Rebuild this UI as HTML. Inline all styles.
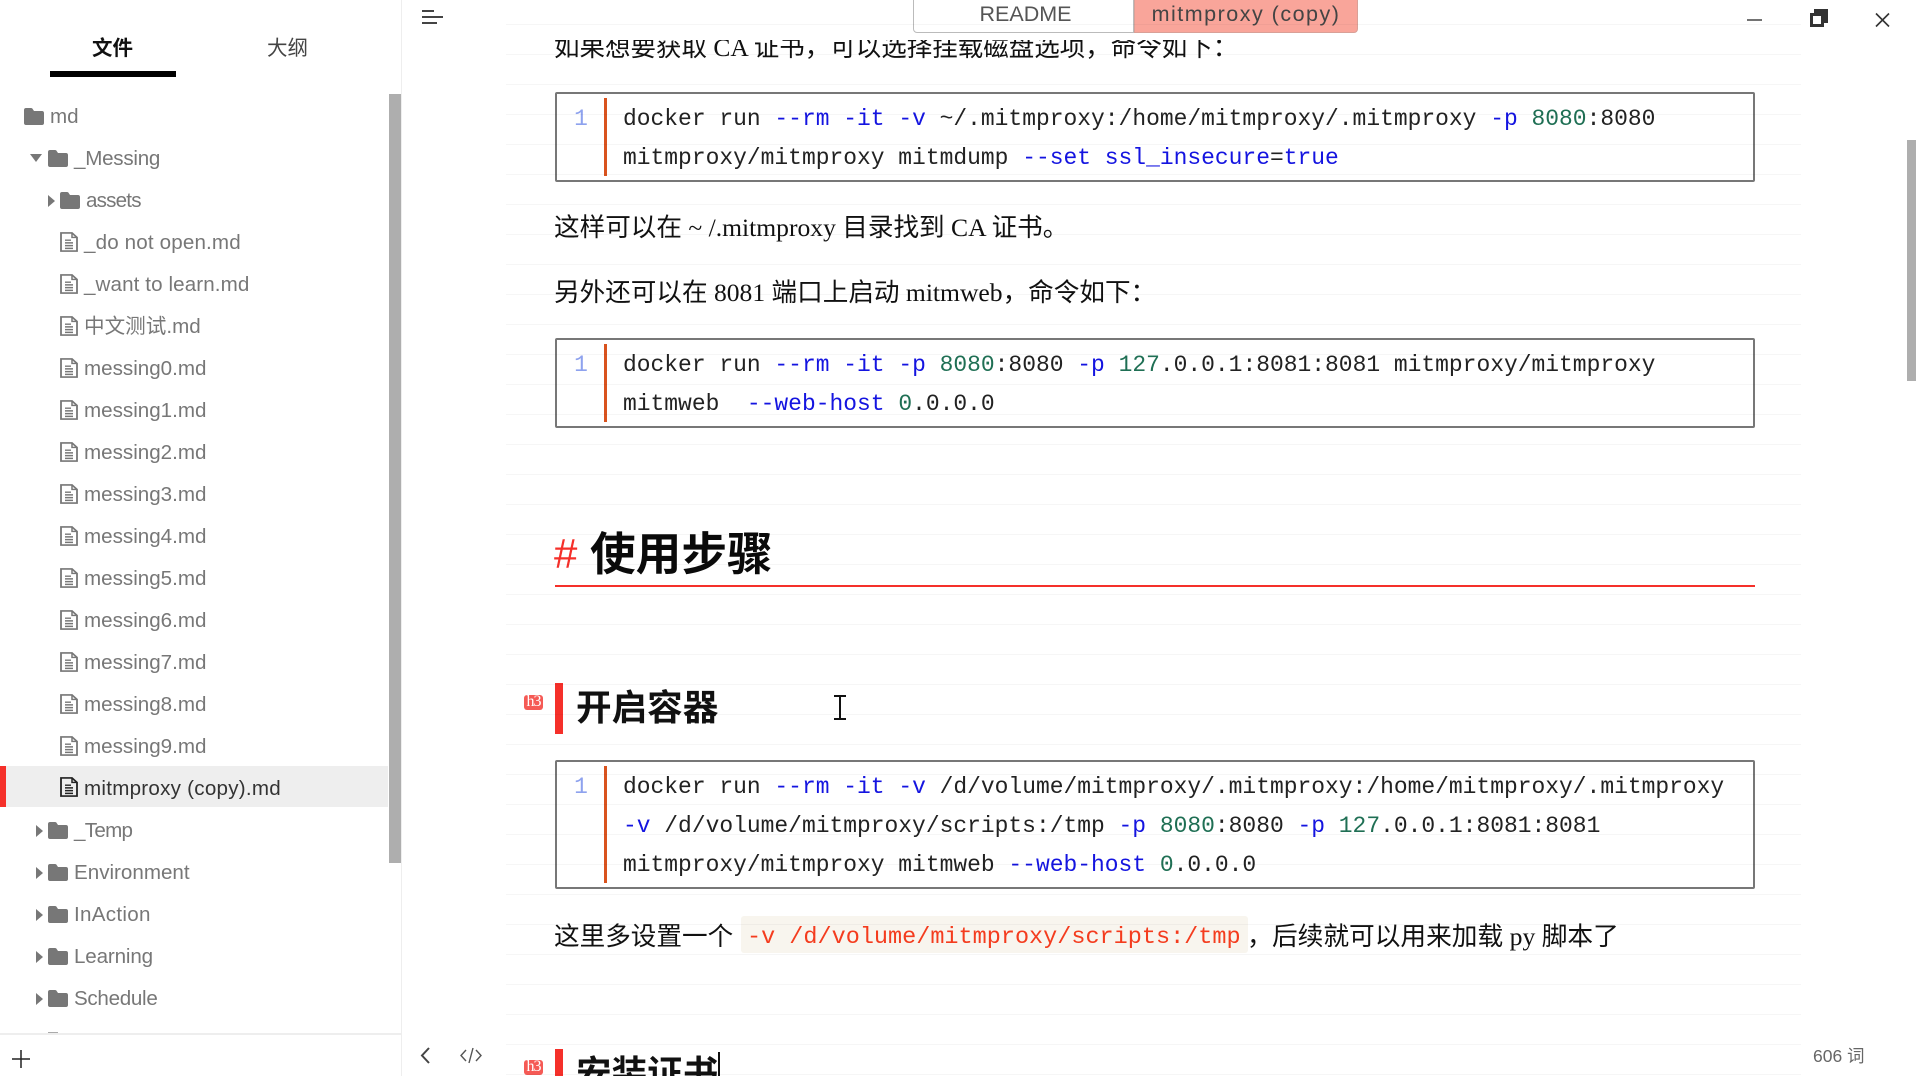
<!DOCTYPE html>
<html lang="zh">
<head>
<meta charset="utf-8">
<title>mitmproxy (copy)</title>
<style>
html,body{margin:0;padding:0;width:1916px;height:1076px;overflow:hidden;background:#fff}
body{position:relative;font-family:"Liberation Sans","Noto Sans CJK SC",sans-serif}
.a{position:absolute}
.lines{position:absolute;left:506px;top:24px;width:1295px;height:1052px;background-image:repeating-linear-gradient(to bottom,rgba(0,0,0,.035) 0,rgba(0,0,0,.035) 1px,transparent 1px,transparent 30px);background-position:0 0;pointer-events:none}
.row{position:absolute;height:42px;line-height:42px;font-size:20.6px;color:#777;white-space:nowrap}
.row.sel{color:#333}
.box{position:absolute;left:555px;width:1196px;border:2px solid #777;border-radius:2px;background:#fff}
.bar{position:absolute;left:604px;width:3px;background:#d9531e}
.num{position:absolute;left:574px;width:14px;text-align:center;font:22.9px/30px "Liberation Mono",monospace;color:#8ea2ee}
.code{position:absolute;left:623px;height:30px;line-height:30px;font-family:"Liberation Mono",monospace;font-size:22.95px;color:#222;white-space:pre}
.code b,.ic b{font-weight:normal}
.f{color:#1414e0}
.n{color:#1f6f54}
.o{color:#333}
.p{position:absolute;left:554px;height:36px;line-height:36px;font-family:"Liberation Serif","Noto Sans CJK SC",serif;font-size:25.6px;color:#111;white-space:pre}
.h3bar{position:absolute;left:555px;width:8px;background:#f5302a}
.h3t{position:absolute;left:576px;height:50px;line-height:50px;font-family:"Liberation Sans","Noto Sans CJK SC",sans-serif;font-weight:700;font-size:35.6px;color:#111;white-space:pre}
.badge{position:absolute;left:524px;width:19px;height:15px;background:#f55a55;border-radius:3px;color:#fff;font:16px/14px "Liberation Serif",serif;letter-spacing:-1px;text-align:center;overflow:hidden}
svg{position:absolute;display:block;overflow:visible}
</style>
</head>
<body>

<!-- sidebar -->
<div class="a" style="left:401px;top:0;width:1px;height:1076px;background:#eeeeee"></div>
<div class="a" style="left:92px;top:32px;height:34px;line-height:34px;font-size:20.5px;font-weight:700;color:#111;font-family:'Liberation Sans','Noto Sans CJK SC',sans-serif">文件</div>
<div class="a" style="left:50px;top:71px;width:126px;height:6px;background:#000"></div>
<div class="a" style="left:267px;top:32px;height:34px;line-height:34px;font-size:20.5px;color:#444">大纲</div>
<div class="a" style="left:389px;top:94px;width:12px;height:769px;background:#aeaeae"></div>

<div class="a" style="left:6px;top:766px;width:382px;height:41px;background:#eeeeee"></div>
<div class="a" style="left:0;top:766px;width:6px;height:41px;background:#f5302a"></div>

<svg width="0" height="0" style="left:0;top:0"><defs>
<symbol id="fd" viewBox="0 0 20 17"><path d="M2 0h5c1 0 1.500.5 2 1.500L10 3h8c1.200 0 2 .8 2 2v10c0 1.200-.8 2-2 2H2c-1.200 0-2-.8-2-2V2C0 .8.800 0 2 0z" fill="#777"/></symbol>
<symbol id="fl" viewBox="0 0 18 22" preserveAspectRatio="none"><path d="M1 1h11l5 5v15H1z" fill="none" stroke="currentColor" stroke-width="1.800"/><path d="M12 1v5h5" fill="none" stroke="currentColor" stroke-width="1.500"/><path d="M5 9h6M5 12h8M5 15h8M5 18h8" stroke="currentColor" stroke-width="1.600"/></symbol>
</defs></svg>

<svg style="left:24px;top:108px" width="20" height="17"><use href="#fd"/></svg>
<div class="row" style="left:50px;top:96px">md</div>

<svg style="left:30px;top:154px" width="12" height="8"><path d="M0 0h12L6 8z" fill="#777"/></svg>
<svg style="left:48px;top:150px" width="20" height="17"><use href="#fd"/></svg>
<div class="row" style="left:74px;top:138px;letter-spacing:-.25px">_Messing</div>

<svg style="left:48px;top:195px" width="7" height="12"><path d="M0 0l7 6-7 6z" fill="#777"/></svg>
<svg style="left:60px;top:192px" width="20" height="17"><use href="#fd"/></svg>
<div class="row" style="left:86px;top:180px;letter-spacing:-.8px">assets</div>

<svg style="left:60px;top:232px;color:#777" width="18" height="20"><use href="#fl"/></svg>
<div class="row" style="left:84px;top:222px;letter-spacing:.15px">_do not open.md</div>
<svg style="left:60px;top:274px;color:#777" width="18" height="20"><use href="#fl"/></svg>
<div class="row" style="left:84px;top:264px;letter-spacing:.1px">_want to learn.md</div>
<svg style="left:60px;top:316px;color:#777" width="18" height="20"><use href="#fl"/></svg>
<div class="row" style="left:84px;top:306px">中文测试.md</div>
<svg style="left:60px;top:358px;color:#777" width="18" height="20"><use href="#fl"/></svg>
<div class="row" style="left:84px;top:348px">messing0.md</div>
<svg style="left:60px;top:400px;color:#777" width="18" height="20"><use href="#fl"/></svg>
<div class="row" style="left:84px;top:390px">messing1.md</div>
<svg style="left:60px;top:442px;color:#777" width="18" height="20"><use href="#fl"/></svg>
<div class="row" style="left:84px;top:432px">messing2.md</div>
<svg style="left:60px;top:484px;color:#777" width="18" height="20"><use href="#fl"/></svg>
<div class="row" style="left:84px;top:474px">messing3.md</div>
<svg style="left:60px;top:526px;color:#777" width="18" height="20"><use href="#fl"/></svg>
<div class="row" style="left:84px;top:516px">messing4.md</div>
<svg style="left:60px;top:568px;color:#777" width="18" height="20"><use href="#fl"/></svg>
<div class="row" style="left:84px;top:558px">messing5.md</div>
<svg style="left:60px;top:610px;color:#777" width="18" height="20"><use href="#fl"/></svg>
<div class="row" style="left:84px;top:600px">messing6.md</div>
<svg style="left:60px;top:652px;color:#777" width="18" height="20"><use href="#fl"/></svg>
<div class="row" style="left:84px;top:642px">messing7.md</div>
<svg style="left:60px;top:694px;color:#777" width="18" height="20"><use href="#fl"/></svg>
<div class="row" style="left:84px;top:684px">messing8.md</div>
<svg style="left:60px;top:736px;color:#777" width="18" height="20"><use href="#fl"/></svg>
<div class="row" style="left:84px;top:726px">messing9.md</div>
<svg style="left:60px;top:777px;color:#222" width="18" height="20"><use href="#fl"/></svg>
<div class="row sel" style="left:84px;top:768px;letter-spacing:.25px">mitmproxy (copy).md</div>

<svg style="left:36px;top:825px" width="7" height="12"><path d="M0 0l7 6-7 6z" fill="#777"/></svg>
<svg style="left:48px;top:822px" width="20" height="17"><use href="#fd"/></svg>
<div class="row" style="left:74px;top:810px;letter-spacing:-.7px">_Temp</div>
<svg style="left:36px;top:867px" width="7" height="12"><path d="M0 0l7 6-7 6z" fill="#777"/></svg>
<svg style="left:48px;top:864px" width="20" height="17"><use href="#fd"/></svg>
<div class="row" style="left:74px;top:852px">Environment</div>
<svg style="left:36px;top:909px" width="7" height="12"><path d="M0 0l7 6-7 6z" fill="#777"/></svg>
<svg style="left:48px;top:906px" width="20" height="17"><use href="#fd"/></svg>
<div class="row" style="left:74px;top:894px;letter-spacing:.3px">InAction</div>
<svg style="left:36px;top:951px" width="7" height="12"><path d="M0 0l7 6-7 6z" fill="#777"/></svg>
<svg style="left:48px;top:948px" width="20" height="17"><use href="#fd"/></svg>
<div class="row" style="left:74px;top:936px;letter-spacing:-.15px">Learning</div>
<svg style="left:36px;top:993px" width="7" height="12"><path d="M0 0l7 6-7 6z" fill="#777"/></svg>
<svg style="left:48px;top:990px" width="20" height="17"><use href="#fd"/></svg>
<div class="row" style="left:74px;top:978px;letter-spacing:-.3px">Schedule</div>

<div class="a" style="left:48px;top:1032px;width:10px;height:1px;background:#aaa"></div>
<div class="a" style="left:0;top:1033px;width:401px;height:43px;background:#fff;border-top:2px solid #eeeeee;box-sizing:border-box"></div>
<svg style="left:12px;top:1050px" width="18" height="18"><path d="M0 9h18M9 0v18" stroke="#222" stroke-width="1.500"/></svg>

<!-- editor chrome -->
<svg style="left:422px;top:10px" width="21" height="14"><path d="M0 1h12M0 7h21M0 13h15" stroke="#444" stroke-width="2"/></svg>
<svg style="left:420px;top:1047px" width="10" height="17"><path d="M9 1L2 8.500 9 16" fill="none" stroke="#444" stroke-width="2"/></svg>
<svg style="left:460px;top:1048px" width="22" height="15"><path d="M6 2L1 7.500 6 13M16 2l5 5.500L16 13M13 0L9 15" fill="none" stroke="#555" stroke-width="1.400"/></svg>
<div class="a" style="left:1813px;top:1044px;height:24px;line-height:24px;font-size:17.5px;color:#666">606 词</div>

<!-- clipped first paragraph -->
<div class="a" style="left:0;top:40px;width:1916px;height:40px;overflow:hidden">
<div class="p" style="top:-10px;font-size:25.5px">如果想要获取 CA 证书，可以选择挂载磁盘选项，命令如下：</div>
</div>

<!-- top tabs -->
<div class="a" style="left:913px;top:-2px;width:221px;height:35px;box-sizing:border-box;background:#fff;border:1px solid #bbb;border-radius:0 0 0 4px;padding-left:4px;text-align:center;font-size:21.5px;line-height:30px;color:#555">README</div>
<div class="a" style="left:1134px;top:-2px;width:224px;height:35px;box-sizing:border-box;background:#f9a59a;border:1px solid #d9a097;border-radius:0 0 4px 0;text-align:center;font-size:21.5px;line-height:30px;letter-spacing:1.5px;color:#444">mitmproxy (copy)</div>

<!-- window controls -->
<svg style="left:1747px;top:19px" width="15" height="2"><path d="M0 1h15" stroke="#444" stroke-width="1.500"/></svg>
<svg style="left:1810px;top:9px" width="18" height="18"><path d="M4 0h14v14h-4v4H0V4h4z" fill="#333"/><rect x="3" y="7" width="8" height="8" fill="#fff"/></svg>
<svg style="left:1875px;top:13px" width="15" height="14"><path d="M1 0.500l13 13M14 0.500l-13 13" stroke="#333" stroke-width="1.600"/></svg>
<div class="a" style="left:1907px;top:140px;width:9px;height:241px;background:#aeaeae"></div>

<!-- box 1 -->
<div class="box" style="top:92px;height:86px"></div>
<div class="bar" style="top:98px;height:78px"></div>
<div class="num" style="top:104px">1</div>
<div class="code" style="top:104px">docker run <b class="f">--rm</b> <b class="f">-it</b> <b class="f">-v</b> ~/.mitmproxy:/home/mitmproxy/.mitmproxy <b class="f">-p</b> <b class="n">8080</b>:8080</div>
<div class="code" style="top:143px">mitmproxy/mitmproxy mitmdump <b class="f">--set</b> <b class="f">ssl_insecure</b>=<b class="f">true</b></div>

<div class="p" style="top:210px">这样可以在 ~ /.mitmproxy 目录找到 CA 证书。</div>
<div class="p" style="top:275px">另外还可以在 8081 端口上启动 mitmweb，命令如下：</div>

<!-- box 2 -->
<div class="box" style="top:338px;height:86px"></div>
<div class="bar" style="top:344px;height:78px"></div>
<div class="num" style="top:350px">1</div>
<div class="code" style="top:350px">docker run <b class="f">--rm</b> <b class="f">-it</b> <b class="f">-p</b> <b class="n">8080</b>:8080 <b class="f">-p</b> <b class="n">127</b>.0.0.1:8081:8081 mitmproxy/mitmproxy</div>
<div class="code" style="top:389px">mitmweb  <b class="f">--web-host</b> <b class="n">0</b>.0.0.0</div>

<!-- h1 -->
<div class="a" style="left:554px;top:529px;height:50px;line-height:50px;font-size:42px;color:#f5302a;font-family:'Liberation Sans',sans-serif">#</div>
<div class="a" style="left:590px;top:527px;height:56px;line-height:56px;font-size:45.7px;font-weight:700;color:#0a0a0a;white-space:pre">使用步骤</div>
<div class="a" style="left:555px;top:585px;width:1200px;height:2px;background:#f5302a"></div>

<!-- h3 -->
<div class="badge" style="top:695px">h3</div>
<div class="h3bar" style="top:683px;height:51px"></div>
<div class="h3t" style="top:683px">开启容器</div>
<svg style="left:833px;top:695px" width="14" height="25"><path d="M1 1h12M1 24h12M7 1v23" fill="none" stroke="#111" stroke-width="2"/></svg>

<!-- box 3 -->
<div class="box" style="top:760px;height:125px"></div>
<div class="bar" style="top:766px;height:117px"></div>
<div class="num" style="top:772px">1</div>
<div class="code" style="top:772px">docker run <b class="f">--rm</b> <b class="f">-it</b> <b class="f">-v</b> /d/volume/mitmproxy/.mitmproxy:/home/mitmproxy/.mitmproxy</div>
<div class="code" style="top:811px"><b class="f">-v</b> /d/volume/mitmproxy/scripts:/tmp <b class="f">-p</b> <b class="n">8080</b>:8080 <b class="f">-p</b> <b class="n">127</b>.0.0.1:8081:8081</div>
<div class="code" style="top:850px">mitmproxy/mitmproxy mitmweb <b class="f">--web-host</b> <b class="n">0</b>.0.0.0</div>

<!-- para with inline code -->
<div class="p" style="top:919px">这里多设置一个</div>
<div class="a" style="left:741px;top:916px;width:507px;height:37px;background:#f8f5ee;border-radius:3px"></div>
<div class="a" style="left:747px;top:923px;height:30px;line-height:30px;font-family:'Liberation Mono',monospace;font-size:23.5px;color:#f43c1e;white-space:pre">-v /d/volume/mitmproxy/scripts:/tmp</div>
<div class="p" style="left:1247px;top:919px">，</div>
<div class="p" style="left:1272px;top:919px;font-size:25.7px">后续就可以用来加载 py 脚本了</div>

<!-- h3 second -->
<div class="badge" style="top:1060px">h3</div>
<div class="h3bar" style="top:1049px;height:27px"></div>
<div class="h3t" style="top:1049px">安装证书</div>
<div class="a" style="left:718px;top:1052px;width:2px;height:24px;background:#111"></div>

<div class="lines"></div>
</body>
</html>
